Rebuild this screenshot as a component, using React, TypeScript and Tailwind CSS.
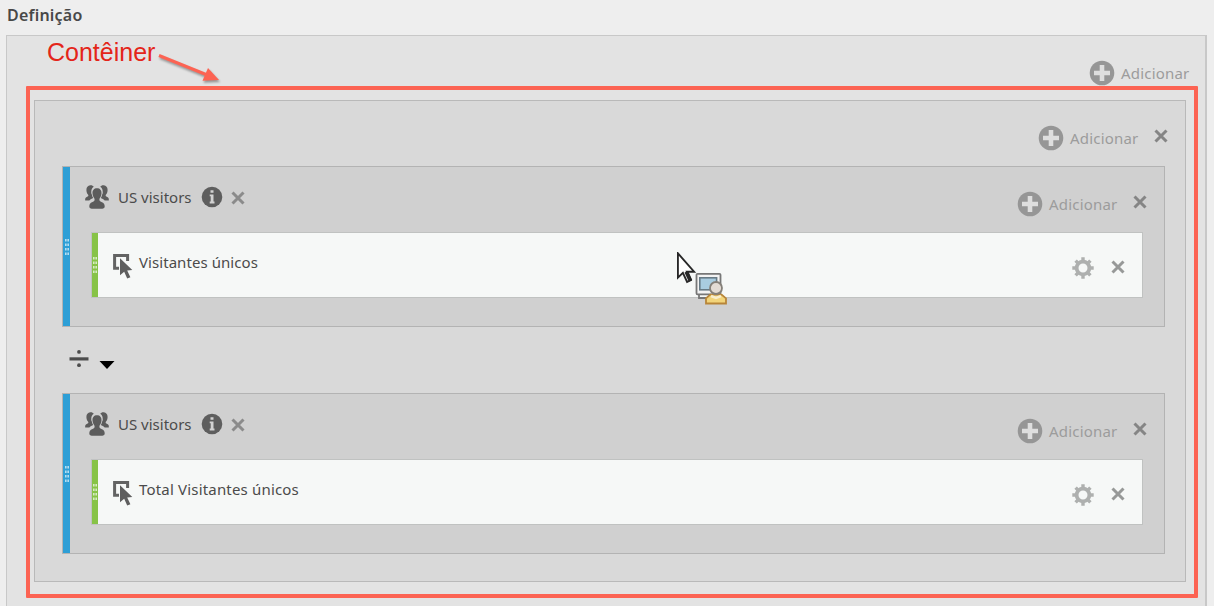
import React from 'react';

function CloseIcon({ className }: { className: string }) {
  return (
    <svg viewBox="0 0 14 14" className={`h-[14px] w-[14px] shrink-0 ${className}`}>
      <path d="M1.5 1.5 12.5 12.5M12.5 1.5 1.5 12.5" stroke="currentColor" strokeWidth="3" fill="none" />
    </svg>
  );
}

function AddButton() {
  return (
    <button className="flex h-[26px] items-center text-[#969696]">
      <svg viewBox="0 0 26 26" className="h-[26px] w-[26px] shrink-0">
        <circle cx="13" cy="13" r="12.3" fill="currentColor" />
        <path d="M13 5v16M5 13h16" stroke="#dedede" strokeWidth="4.6" />
      </svg>
      <span className="ml-[6px] w-[69px] whitespace-nowrap text-left text-[15px] leading-[26px] tracking-[0.2px] text-[#9c9c9c]">Adicionar</span>
    </button>
  );
}

function PeopleIcon() {
  return (
    <svg viewBox="0 0 24 24" className="h-6 w-6 shrink-0" fill="#5c5c5c">
      <path d="M5.2.3C6.8.1 8 .7 8.8 1.8 6.8 3 6 5.2 6.3 7.8c.2 1.7 1.2 3 1.6 4.1.2 1-.2 1.5-1.2 1.9-1 .4-1.8.9-2.4 1.7H.2c-.2-2.4.2-3 1.6-3.6 1.2-.5 1.7-.9 1.5-1.9C2.2 8.8 1.4 7.4 1.4 5 1.4 2.2 2.9.5 5.2.3Z" />
      <path d="M18.8.3C17.2.1 16 .7 15.2 1.8c2 1.2 2.8 3.4 2.5 6-.2 1.7-1.2 3-1.6 4.1-.2 1 .2 1.5 1.2 1.9 1 .4 1.8.9 2.4 1.7h4.1c.2-2.4-.2-3-1.6-3.6-1.2-.5-1.7-.9-1.5-1.9 1.1-1.2 1.9-2.6 1.9-5C22.6 2.2 21.1.5 18.8.3Z" />
      <path
        d="M12 3.2c3 0 4.7 2 4.5 5.2-.2 2.8-1.6 4.4-2.1 5.6-.1 1.9.6 2.3 2.1 2.9 2.4.9 3.2 1.9 3.2 4.7 0 1.4-1 2.1-2.5 2.1H6.8c-1.5 0-2.5-.7-2.5-2.1 0-2.8.8-3.8 3.2-4.7 1.5-.6 2.2-1 2.1-2.9-.5-1.2-1.9-2.8-2.1-5.6C7.3 5.2 9 3.2 12 3.2Z"
        stroke="#d0d0d0"
        strokeWidth="1.4"
        paintOrder="stroke"
      />
    </svg>
  );
}

function InfoIcon() {
  return (
    <svg viewBox="0 0 22 22" className="h-[22px] w-[22px] shrink-0">
      <circle cx="11" cy="11" r="10.3" fill="#5e5e5e" />
      <path d="M9.5 4.2h3v2.5h-3zM8.7 8.4h3.8v7.2h1v1.8H8.7v-1.8h1v-5.4h-1z" fill="#d2d2d2" />
    </svg>
  );
}

function MetricIcon() {
  return (
    <svg viewBox="0 0 20 25" className="h-[25px] w-5 shrink-0">
      <path d="M6 14.2H1.6V1.6h13V7" fill="none" stroke="#636363" strokeWidth="3" />
      <path d="M7 4.2 19.3 16.1l-5.1.4 3.2 6.7-3.2 1.4-3-6.8L7 21.2Z" fill="#5e5e5e" />
    </svg>
  );
}

function GearIcon() {
  return (
    <svg viewBox="0 0 22 22" className="h-[22px] w-[22px] shrink-0" stroke="#aeb0af" fill="none">
      <circle cx="11" cy="11" r="6.4" strokeWidth="3.8" />
      <path
        d="M11 .3v4M11 17.7v4M.3 11h4M17.7 11h4M3.6 3.6l2.6 2.6M15.8 15.8l2.6 2.6M18.4 3.6l-2.6 2.6M6.2 15.8l-2.6 2.6"
        strokeWidth="3.4"
      />
    </svg>
  );
}

function Grip() {
  return (
    <svg viewBox="0 0 4 16" className="h-4 w-1 shrink-0" fill="currentColor">
      <path d="M0 0h1.6v2.4H0zM2.4 0H4v2.4H2.4zM0 4.5h1.6v2.4H0zM2.4 4.5H4v2.4H2.4zM0 9h1.6v2.4H0zM2.4 9H4v2.4H2.4zM0 13.5h1.6v2.4H0zM2.4 13.5H4v2.4H2.4z" />
    </svg>
  );
}

function Segment({ metric, tracking }: { metric: string; tracking: string }) {
  return (
    <section className="flex h-[161px] border border-[#b3b3b3] bg-[#d0d0d0]">
      <div className="flex w-[7px] shrink-0 items-center justify-end bg-[#2e9fd6] pr-px text-[#b5def2]">
        <Grip />
      </div>
      <div className="flex-1 pl-[21px] pr-[21px]">
        <header className="flex h-[65px] items-start">
          <div className="-ml-[6px] mt-[18px] flex h-6 items-center">
            <PeopleIcon />
            <span className="ml-[9px] w-[83px] whitespace-nowrap text-[15px] leading-6 text-[#4b4b4b]">US visitors</span>
            <InfoIcon />
            <CloseIcon className="ml-[8px] mt-[2px] text-[#8b8b8b]" />
          </div>
          <div className="-mr-[4px] ml-auto flex items-start">
            <div className="mt-[24px]">
              <AddButton />
            </div>
            <CloseIcon className="ml-[15px] mt-[28px] text-[#858585]" />
          </div>
        </header>
        <div className="flex h-[66px] border border-[#c0c2c1] bg-[#f6f8f7]">
          <div className="flex w-[6px] shrink-0 items-center justify-end bg-[#87c347] pr-px text-[#d7ecc3]">
            <Grip />
          </div>
          <div className="ml-[15px] mt-[21px]">
            <MetricIcon />
          </div>
          <span className={`ml-[6px] mt-[17px] whitespace-nowrap text-[15px] leading-6 text-[#4b4b4b] ${tracking}`}>{metric}</span>
          <div className="ml-auto mr-[17px] mt-[24px] flex items-start">
            <GearIcon />
            <CloseIcon className="ml-[17px] mt-[3px] text-[#979998]" />
          </div>
        </div>
      </div>
    </section>
  );
}

function DragCursor() {
  return (
    <svg viewBox="0 0 52 54" className="absolute left-[677px] top-[252px] h-[54px] w-[52px]">
      <path d="M.9 1.3v24.3l5-4.7 4.2 9 3.8-1.8-4-8.4h7.2Z" fill="#fff" stroke="#272727" strokeWidth="1.9" />
      <path d="m7.5 20.5 3.7-1.5 4 9-3.4 1.8z" fill="#272727" />
      <rect x="19.5" y="21.8" width="24" height="20.5" rx="1" fill="#f3f3f3" stroke="#777" strokeWidth="1.8" />
      <path d="M22 43v3h8" fill="none" stroke="#777" strokeWidth="1.8" />
      <rect x="22.8" y="25.8" width="16.8" height="12" fill="#a9cce0" stroke="#687b86" strokeWidth="1.6" />
      <path d="M29 51.5v-5.2l4.2-3.7h11.4l4.4 3.7v5.2z" fill="#f2d47a" stroke="#b78539" strokeWidth="1.8" />
      <circle cx="39" cy="36" r="6" fill="#e3dbd4" stroke="#858079" strokeWidth="1.8" />
      <path d="m34 44 5 2 5-2" fill="none" stroke="#f8edcc" strokeWidth="2.5" />
    </svg>
  );
}

export default function App() {
  return (
    <main className="relative flex h-[606px] w-[1214px] flex-col overflow-hidden bg-[#eeeeee] font-['Noto_Sans','Open_Sans',sans-serif]">
      <h1 className="h-[35px] shrink-0 pl-[7px] pt-[3px] text-[16px] font-semibold leading-[24px] tracking-[0.22px] text-[#484848]">Definição</h1>
      <div className="ml-[6px] flex h-[600px] w-[1201px] shrink-0 flex-col border-2 border-l-1 border-t-1 border-[#c8c8c8] bg-[#e3e3e3]">
        <div className="flex h-[64px] shrink-0 justify-end pr-[15px] pt-[24px]">
          <AddButton />
        </div>
        <div className="ml-[27px] h-[482px] w-[1152px] shrink-0 border border-[#b9b9b9] bg-[#d9d9d9] pl-[27px] pr-[20px]">
          <div className="flex h-[65px] items-start justify-end">
            <div className="mt-[24px]">
              <AddButton />
            </div>
            <CloseIcon className="ml-[15px] mr-[-3px] mt-[28px] text-[#858585]" />
          </div>
          <Segment metric="Visitantes únicos" tracking="tracking-[0.06px]" />
          <div className="flex h-[66px] items-start">
            <svg viewBox="0 0 20 18" className="ml-[7px] mt-[23px] h-[18px] w-5" fill="#4c4c4c">
              <path d="M.5 7.3h19v3.2H.5z" />
              <circle cx="10" cy="1.9" r="1.9" />
              <circle cx="10" cy="15.2" r="1.9" />
            </svg>
            <svg viewBox="0 0 16 8" className="ml-[10px] mt-[34px] h-2 w-4" fill="#000">
              <path d="M.5 0h15L8 8Z" />
            </svg>
          </div>
          <Segment metric="Total Visitantes únicos" tracking="tracking-[0.18px]" />
        </div>
      </div>
      <div className="pointer-events-none absolute left-[26px] top-[86px] h-[512px] w-[1172px] rounded-[1px] border-4 border-[#fc6353]" />
      <div className="absolute left-[47px] top-[36px] font-['Liberation_Sans',sans-serif] text-[25px] leading-[32px] text-[#e42519]">Contêiner</div>
      <svg viewBox="0 0 70 40" className="absolute left-[155px] top-[48px] h-10 w-[70px] drop-shadow-[1px_2px_1px_rgba(0,0,0,0.35)]">
        <path d="M4 7.5 51 26.5" stroke="#fc6353" strokeWidth="3" />
        <path d="M53 20 64 32l-16.5.8Z" fill="#fc6353" />
      </svg>
      <DragCursor />
    </main>
  );
}
